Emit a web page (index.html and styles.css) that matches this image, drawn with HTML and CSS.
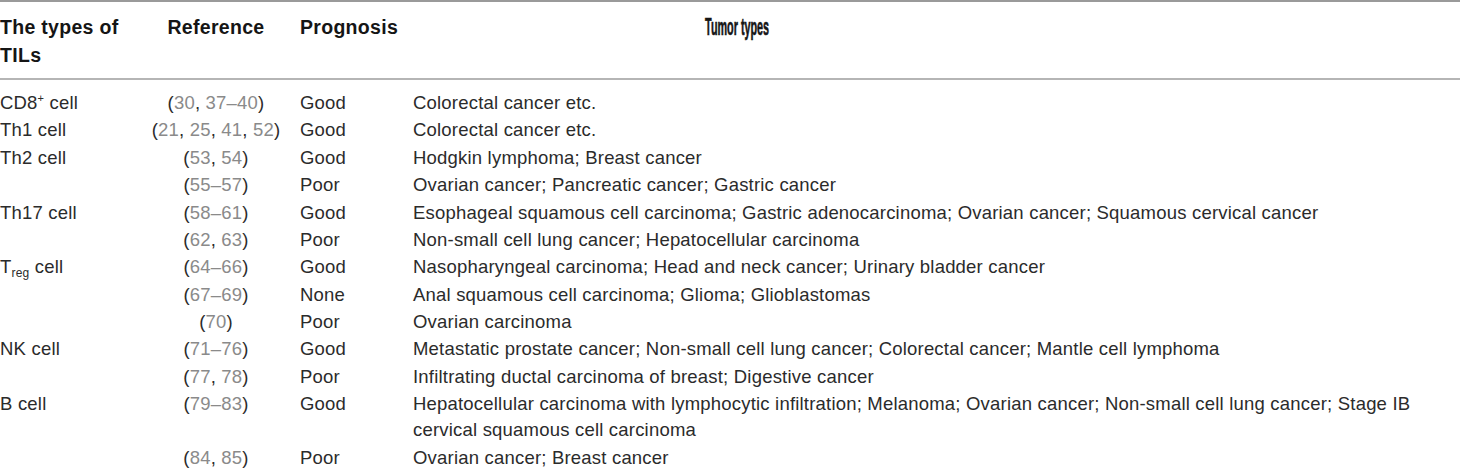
FILE: index.html
```html
<!DOCTYPE html>
<html>
<head>
<meta charset="utf-8">
<link rel="stylesheet" href="styles.css">
</head>
<body>
<table class="tbl">
  <colgroup>
    <col class="c1"><col class="c2"><col class="c3"><col class="c4">
  </colgroup>
  <thead>
    <tr>
      <th class="h1">The types of<br>TILs</th>
      <th class="h2">Reference</th>
      <th class="h3">Prognosis</th>
      <th class="h4"><span class="narrow">Tumor types</span></th>
    </tr>
  </thead>
  <tbody>
    <tr class="first"><td>CD8<sup>+</sup> cell</td><td class="ref">(<span class="n">30</span>, <span class="n">37–40</span>)</td><td>Good</td><td>Colorectal cancer etc.</td></tr>
    <tr><td>Th1 cell</td><td class="ref">(<span class="n">21</span>, <span class="n">25</span>, <span class="n">41</span>, <span class="n">52</span>)</td><td>Good</td><td>Colorectal cancer etc.</td></tr>
    <tr><td>Th2 cell</td><td class="ref">(<span class="n">53</span>, <span class="n">54</span>)</td><td>Good</td><td>Hodgkin lymphoma; Breast cancer</td></tr>
    <tr><td></td><td class="ref">(<span class="n">55–57</span>)</td><td>Poor</td><td>Ovarian cancer; Pancreatic cancer; Gastric cancer</td></tr>
    <tr><td>Th17 cell</td><td class="ref">(<span class="n">58–61</span>)</td><td>Good</td><td>Esophageal squamous cell carcinoma; Gastric adenocarcinoma; Ovarian cancer; Squamous cervical cancer</td></tr>
    <tr><td></td><td class="ref">(<span class="n">62</span>, <span class="n">63</span>)</td><td>Poor</td><td>Non-small cell lung cancer; Hepatocellular carcinoma</td></tr>
    <tr><td>T<sub>reg</sub> cell</td><td class="ref">(<span class="n">64–66</span>)</td><td>Good</td><td>Nasopharyngeal carcinoma; Head and neck cancer; Urinary bladder cancer</td></tr>
    <tr><td></td><td class="ref">(<span class="n">67–69</span>)</td><td>None</td><td>Anal squamous cell carcinoma; Glioma; Glioblastomas</td></tr>
    <tr><td></td><td class="ref">(<span class="n">70</span>)</td><td>Poor</td><td>Ovarian carcinoma</td></tr>
    <tr><td>NK cell</td><td class="ref">(<span class="n">71–76</span>)</td><td>Good</td><td>Metastatic prostate cancer; Non-small cell lung cancer; Colorectal cancer; Mantle cell lymphoma</td></tr>
    <tr><td></td><td class="ref">(<span class="n">77</span>, <span class="n">78</span>)</td><td>Poor</td><td>Infiltrating ductal carcinoma of breast; Digestive cancer</td></tr>
    <tr><td>B cell</td><td class="ref">(<span class="n">79–83</span>)</td><td>Good</td><td>Hepatocellular carcinoma with lymphocytic infiltration; Melanoma; Ovarian cancer; Non-small cell lung cancer; Stage IB<br>cervical squamous cell carcinoma</td></tr>
    <tr><td></td><td class="ref">(<span class="n">84</span>, <span class="n">85</span>)</td><td>Poor</td><td>Ovarian cancer; Breast cancer</td></tr>
  </tbody>
</table>
</body>
</html>
```

FILE: styles.css
```css
html, body {
  margin: 0;
  padding: 0;
  background: #fff;
}
body {
  font-family: "Liberation Sans", Arial, sans-serif;
  color: #2b2b2b;
}
.tbl {
  width: 1460px;
  border-collapse: collapse;
  table-layout: fixed;
  border-top: 2px solid #9a9a9a;
}
.c1 { width: 140px; }
.c2 { width: 152px; }
.c3 { width: 121px; }
.c4 { width: 1047px; }

thead th {
  font-size: 19.5px;
  letter-spacing: 0.3px;
  font-weight: bold;
  color: #151515;
  line-height: 28px;
  text-align: left;
  vertical-align: top;
  padding: 11px 0 9px 0;
  border-bottom: 2px solid #b5b5b5;
}
thead th.h2 { text-align: center; }
thead th.h3 { padding-left: 8px; }
thead th.h4 {
  text-align: center;
  padding-right: 399px;
}
.narrow {
  display: inline-block;
  font-size: 24px;
  letter-spacing: 0;
  transform: scaleX(0.45);
  transform-origin: center;
  -webkit-text-stroke: 0.6px #151515;
}

tbody td {
  font-size: 18.5px;
  letter-spacing: 0.2px;
  line-height: 26px;
  padding: 0.7px 0;
  vertical-align: top;
  white-space: nowrap;
}
tbody tr.first td {
  padding-top: 10px;
}
tbody td:nth-child(3) { padding-left: 8px; }
td.ref { text-align: center; }
.n { color: #8a8a8a; }
sup {
  font-size: 11px;
  line-height: 0;
  vertical-align: 7px;
}
sub {
  font-size: 12px;
  line-height: 0;
  vertical-align: -4px;
}
```
